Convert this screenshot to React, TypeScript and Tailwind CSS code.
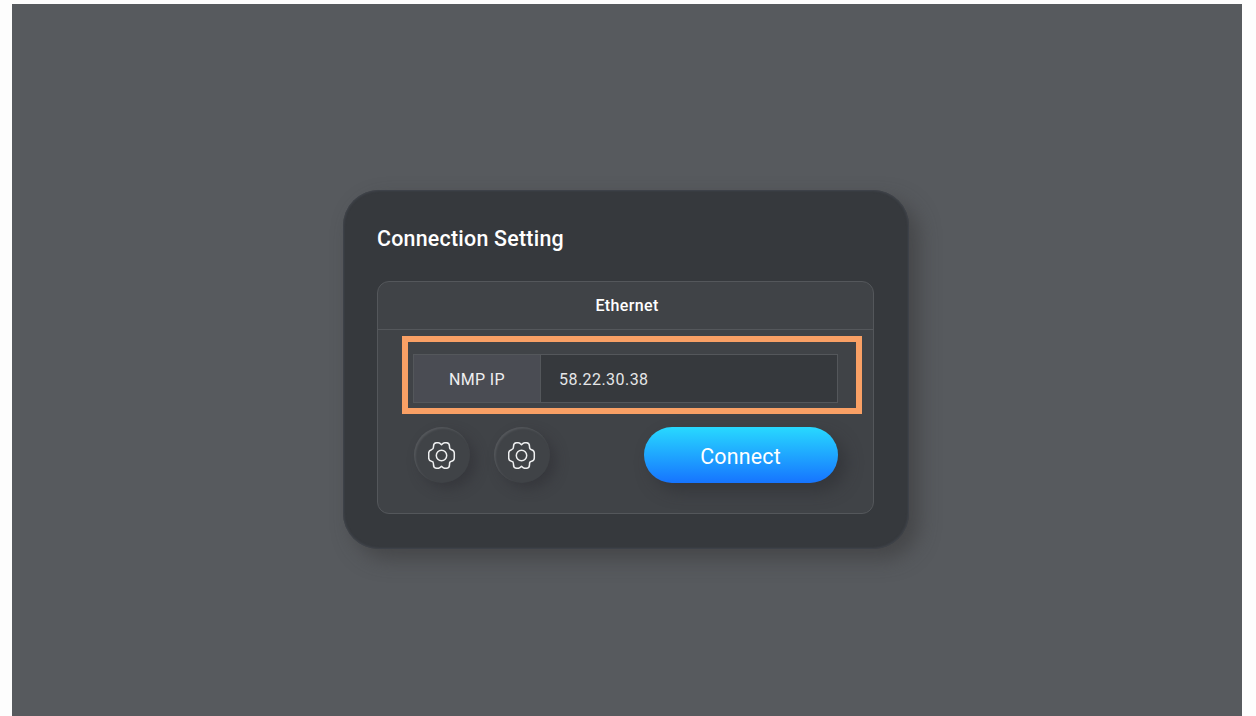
function GearIcon() {
  return (
    <svg viewBox="-13.5 -14.5 28 28" className="h-7 w-7" fill="none" stroke="#eeeff0" strokeWidth="1.5" strokeLinejoin="round">
      <path d="M0 -10.8Q1.8 -12.8 3.2 -12.8L5 -12.8Q8 -12.6 8 -9.2L8 -8.4Q8 -6.2 10 -5.8Q12.8 -5 12.8 -2.4L12.8 2.4Q12.8 5 10 5.8Q8 6.2 8 8.4L8 9.2Q8 12.6 5 12.8L3.2 12.8Q1.8 12.8 0 10.8Q-1.8 12.8 -3.2 12.8L-5 12.8Q-8 12.6 -8 9.2L-8 8.4Q-8 6.2 -10 5.8Q-12.8 5 -12.8 2.4L-12.8 -2.4Q-12.8 -5 -10 -5.8Q-8 -6.2 -8 -8.4L-8 -9.2Q-8 -12.6 -5 -12.8L-3.2 -12.8Q-1.8 -12.8 0 -10.8Z" />
      <circle r="5.2" />
    </svg>
  );
}

function RoundButton({ label }: { label: string }) {
  return (
    <button
      aria-label={label}
      className="flex h-14 w-14 items-center justify-center rounded-full bg-[#404347] shadow-[inset_1.5px_1.5px_2px_#54575b,6px_6px_12px_rgba(45,46,52,0.5)]"
    >
      <GearIcon />
    </button>
  );
}

export default function App() {
  return (
    <div className="h-[716px] w-[1256px] overflow-hidden bg-[#fdfdfd] pt-1 pr-3.5 pl-3 font-[Roboto,sans-serif]">
      <main className="h-[712px] bg-[#575a5e] pt-[186px] pl-[331px]">
        <section className="h-[359px] w-[566px] rounded-[36px] bg-[#36393d] pt-[91px] pl-[34px] shadow-[inset_0_0_2px_1px_#41454c,10px_10px_20px_rgba(60,60,62,0.65)]">
          <h1 className="-mt-[56px] flex h-[56px] items-start text-[21.4px] leading-7 font-medium tracking-[0.24px] text-white">
            Connection Setting
          </h1>
          <div className="h-[233px] w-[497px] rounded-xl border border-[#54575b] bg-[#404347]">
            <h2 className="flex h-12 items-center justify-center border-b border-[#54575b] pl-[3px] text-base font-medium tracking-[0.36px] text-white">
              Ethernet
            </h2>
            <div className="mt-1.5 ml-6 h-[78px] w-[460px] border-6 border-[#f9a065] pt-3 pl-[5px]">
              <div className="flex h-[49px] w-[425px] border border-[#54575b]">
                <label className="flex w-[127px] items-center justify-center border-r border-[#54575b] bg-[#4a4c53] pt-0.5 text-base tracking-[0.36px] text-[#eeeff0]">
                  NMP IP
                </label>
                <div className="flex flex-1 items-center bg-[#36393d] pt-0.5 pl-[18px] text-base tracking-[0.45px] text-[#e5e6e8]">
                  58.22.30.38
                </div>
              </div>
            </div>
            <div className="mt-[13px] flex pl-[35.5px]">
              <div className="flex gap-6">
                <RoundButton label="Network settings" />
                <RoundButton label="System settings" />
              </div>
              <button className="ml-[94.5px] flex h-14 w-[194px] items-center justify-center rounded-full bg-linear-to-b/srgb from-[#28d9ff] to-[#1674ff] pt-1 pr-px text-[21.4px] leading-8 tracking-[0.2px] text-white shadow-[8px_8px_16px_rgba(45,46,52,0.6)]">
                Connect
              </button>
            </div>
          </div>
        </section>
      </main>
    </div>
  );
}
